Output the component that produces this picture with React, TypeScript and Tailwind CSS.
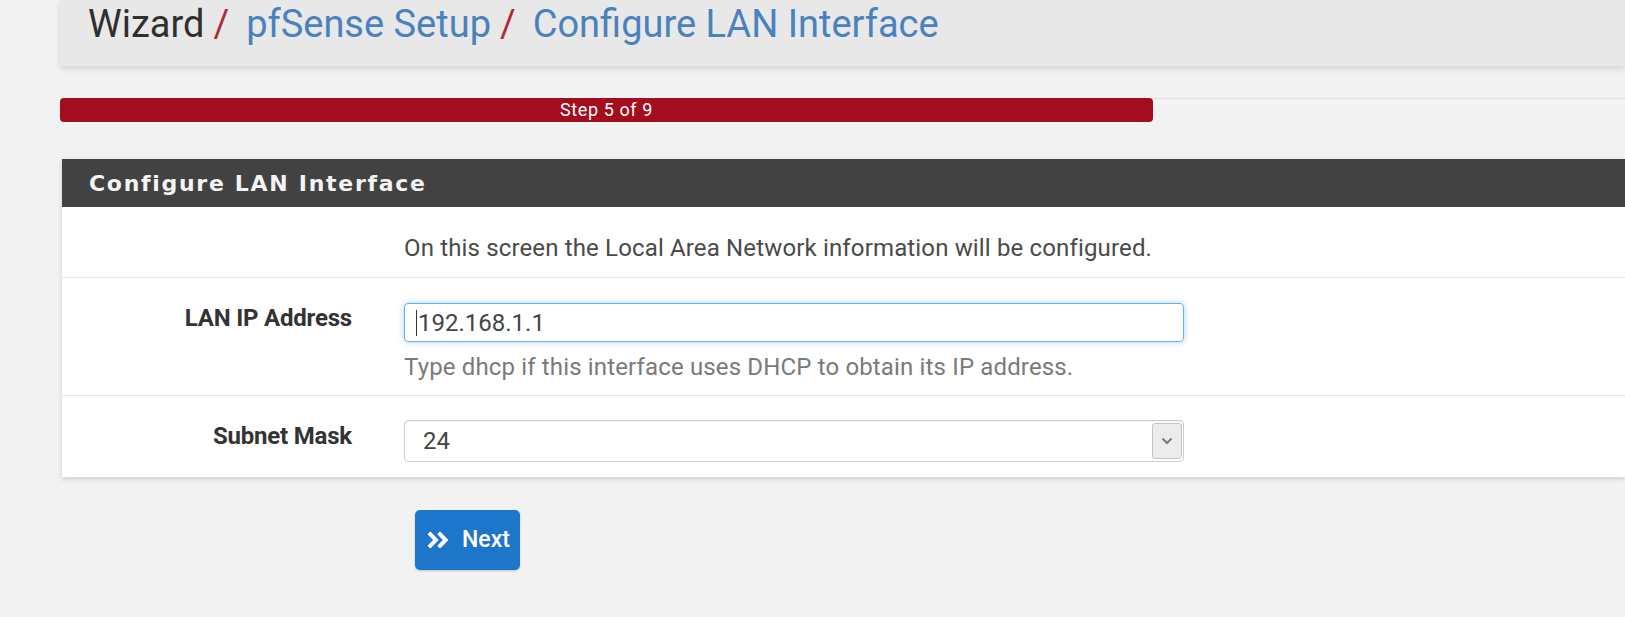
import React from "react";
import { FaAngleDoubleRight } from "react-icons/fa";

const font = { fontFamily: "Roboto, 'Liberation Sans', sans-serif" };

const Breadcrumb: React.FC = () => (
  <div className="ml-[60px] h-[66px] bg-[#e8e8e8] shadow-[0_3px_6px_rgba(0,0,0,0.12)] pl-[28px] pt-[5px]">
    <h1 className="flex items-baseline text-[38px] leading-none">
      <span className="text-[#2f2f2f]">Wizard</span>
      <span className="ml-[9px] mr-[17px] text-[#b0283a]">/</span>
      <span className="text-[#4a82bd]">pfSense Setup</span>
      <span className="ml-[9px] mr-[17px] text-[#b0283a]">/</span>
      <span className="text-[#4a82bd]">Configure LAN Interface</span>
    </h1>
  </div>
);

const Progress: React.FC = () => (
  <div className="ml-[60px] mt-[32px] h-[24px] w-[1967px] rounded-[4px] bg-[#f3f3f3] shadow-[inset_0_1px_1px_rgba(0,0,0,0.08)]">
    <div className="flex h-full w-[1093px] items-center justify-center rounded-[4px] bg-[#a30d1d] text-[18px] leading-none tracking-[0.6px] text-white">
      Step 5 of 9
    </div>
  </div>
);

const Label: React.FC<{ children: React.ReactNode; className?: string }> = ({
  children,
  className,
}) => (
  <div className={`text-right text-[24px] font-bold tracking-[-0.2px] text-[#333] ${className ?? ""}`}>
    {children}
  </div>
);

export default function App() {
  return (
    <div className="min-h-screen w-full overflow-hidden bg-[#f2f2f2]" style={font}>
      <Breadcrumb />
      <Progress />

      {/* Panel */}
      <div className="ml-[62px] mt-[37px] bg-white shadow-[0_2px_5px_rgba(0,0,0,0.15)]">
        <div className="flex h-[48px] items-center bg-[#424242] pl-[27px]">
          <h2
            className="text-[22px] font-bold tracking-[1.7px] text-[#f4f4f4]"
            style={{ fontFamily: "'DejaVu Sans', Verdana, sans-serif" }}
          >
            Configure LAN Interface
          </h2>
        </div>

        {/* description row */}
        <div className="grid h-[71px] grid-cols-[290px_1fr] gap-x-[52px] border-b border-[#e6e6e6]">
          <div />
          <p className="pt-[27px] text-[24px] leading-[28px] tracking-[0.15px] text-[#4a4a4a]">
            On this screen the Local Area Network information will be configured.
          </p>
        </div>

        {/* LAN IP row */}
        <div className="grid h-[118px] grid-cols-[290px_1fr] gap-x-[52px] border-b border-[#e6e6e6]">
          <Label className="pt-[22px]">LAN IP Address</Label>
          <div className="pt-[25px]">
            <div className="flex h-[39px] w-[780px] items-center rounded-[4px] border border-[#66afe9] pl-[11px] text-[24px] text-[#444] shadow-[0_0_6px_rgba(102,175,233,0.55)]">
              <span className="mr-[1px] h-[26px] w-[1px] bg-[#333]" />
              192.168.1.1
            </div>
            <p className="mt-[11px] text-[24px] leading-[28px] tracking-[0.15px] text-[#7a7a7a]">
              Type dhcp if this interface uses DHCP to obtain its IP address.
            </p>
          </div>
        </div>

        {/* Subnet row */}
        <div className="grid h-[81px] grid-cols-[290px_1fr] gap-x-[52px]">
          <Label className="pt-[22px]">Subnet Mask</Label>
          <div className="pt-[24px]">
            <div className="flex h-[42px] w-[780px] items-center justify-between rounded-[4px] border border-[#cfcfcf] text-[24px] text-[#444] shadow-[inset_0_1px_1px_rgba(0,0,0,0.06)]">
              <span className="pl-[18px]">24</span>
              <span className="mr-[1px] flex h-[36px] w-[30px] items-center justify-center rounded-[3px] border border-[#c4c4c4] bg-[#ececec]">
                <svg width="12" height="8" viewBox="0 0 12 8" fill="none">
                  <path d="M1.5 1.5 6 6l4.5-4.5" stroke="#7a7a7a" strokeWidth="2" />
                </svg>
              </span>
            </div>
          </div>
        </div>
      </div>

      {/* Next button */}
      <button className="ml-[415px] mt-[33px] flex h-[60px] w-[105px] items-center gap-[11px] rounded-[5px] bg-[#1d76c9] pl-[10px] text-[23px] font-medium text-white shadow-[0_1px_2px_rgba(0,0,0,0.2)]">
        <FaAngleDoubleRight className="text-[26px]" />
        Next
      </button>
    </div>
  );
}
